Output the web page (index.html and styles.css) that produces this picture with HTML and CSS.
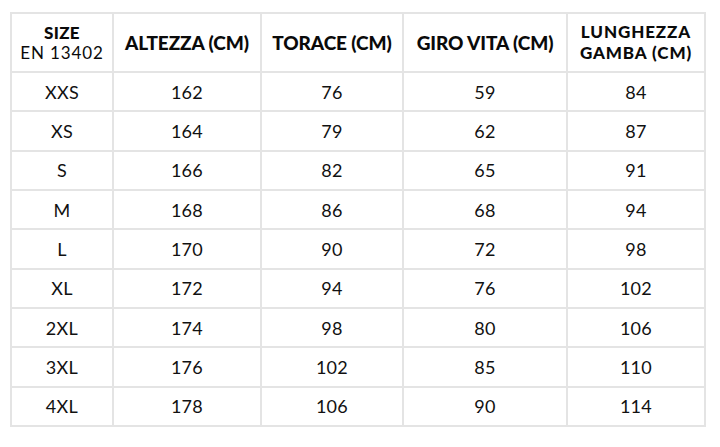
FILE: index.html
```html
<!DOCTYPE html>
<html lang="it">
<head>
<meta charset="utf-8">
<title>Tabella taglie</title>
<link rel="stylesheet" href="styles.css">
</head>
<body>
<div class="chart">
  <div class="cell head size"><b>SIZE</b><span>EN 13402</span></div>
  <div class="cell head">ALTEZZA (CM)</div>
  <div class="cell head">TORACE (CM)</div>
  <div class="cell head">GIRO VITA (CM)</div>
  <div class="cell head two"><span>LUNGHEZZA</span><span>GAMBA (CM)</span></div>

  <div class="cell">XXS</div><div class="cell">162</div><div class="cell">76</div><div class="cell">59</div><div class="cell">84</div>
  <div class="cell">XS</div><div class="cell">164</div><div class="cell">79</div><div class="cell">62</div><div class="cell">87</div>
  <div class="cell">S</div><div class="cell">166</div><div class="cell">82</div><div class="cell">65</div><div class="cell">91</div>
  <div class="cell">M</div><div class="cell">168</div><div class="cell">86</div><div class="cell">68</div><div class="cell">94</div>
  <div class="cell">L</div><div class="cell">170</div><div class="cell">90</div><div class="cell">72</div><div class="cell">98</div>
  <div class="cell">XL</div><div class="cell">172</div><div class="cell">94</div><div class="cell">76</div><div class="cell">102</div>
  <div class="cell">2XL</div><div class="cell">174</div><div class="cell">98</div><div class="cell">80</div><div class="cell">106</div>
  <div class="cell">3XL</div><div class="cell">176</div><div class="cell">102</div><div class="cell">85</div><div class="cell">110</div>
  <div class="cell">4XL</div><div class="cell">178</div><div class="cell">106</div><div class="cell">90</div><div class="cell">114</div>
</div>
</body>
</html>
```

FILE: styles.css
```css
html, body {
  margin: 0;
  padding: 0;
  background: #ffffff;
}
body {
  font-family: Lato, "Open Sans", "Liberation Sans", sans-serif;
  color: #111111;
}
.chart {
  display: grid;
  grid-template-columns: 100px 146px 140px 162px 136px;
  grid-template-rows: 57px repeat(9, 37.33px);
  gap: 2px;
  padding: 2px;
  background: #e4e4e4;
  width: max-content;
  margin: 12px 0 0 10px;
}
.cell {
  background: #ffffff;
  display: flex;
  align-items: center;
  justify-content: center;
  text-align: center;
  font-size: 18px;
  line-height: 1;
  letter-spacing: 0.3px;
}
.head {
  font-weight: 900;
  font-size: 19px;
  letter-spacing: -0.1px;
  color: #0a0a0a;
}
.size,
.two {
  flex-direction: column;
  font-size: 17px;
  line-height: 20.5px;
}
.size {
  padding-top: 1px;
}
.size b {
  font-weight: 900;
  letter-spacing: 0.3px;
}
.size span {
  font-weight: 400;
  letter-spacing: 0.9px;
}
.two span {
  letter-spacing: 0.9px;
}
```
